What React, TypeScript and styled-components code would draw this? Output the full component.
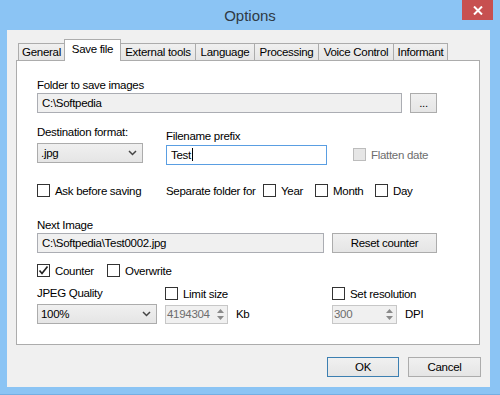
import styled, { createGlobalStyle } from "styled-components";

const GlobalStyle = createGlobalStyle`
  html, body {
    margin: 0;
    padding: 0;
  }
  body {
    width: 500px;
    height: 395px;
    overflow: hidden;
    font-family: "Liberation Sans", Arial, sans-serif;
    font-size: 11.5px;
    letter-spacing: -0.3px;
    color: #000;
  }
`;

const Window = styled.div`
  width: 500px;
  height: 395px;
  box-sizing: border-box;
  background: #8bc4f4;
  border-bottom: 1px solid #74aee2;
  display: flex;
  flex-direction: column;
`;

const TitleBar = styled.div`
  position: relative;
  height: 30px;
  display: flex;
  align-items: center;
  justify-content: center;
  font-size: 15px;
  letter-spacing: 0;
  color: #2f3a44;
  box-sizing: border-box;
`;

const CloseButton = styled.div`
  position: absolute;
  top: 0;
  right: 7px;
  width: 31px;
  height: 20px;
  background: #c75050;
  display: flex;
  align-items: center;
  justify-content: center;
`;

const Client = styled.div`
  flex: 1;
  margin: 0 10px 7px 7px;
  background: #f0f0f0;
  padding: 9px 0 0 9px;
  display: flex;
  flex-direction: column;
`;

const TabStrip = styled.div`
  display: flex;
  align-items: flex-end;
  height: 22px;
  padding-left: 3px;
  margin-bottom: -1px;
  position: relative;
  z-index: 1;
`;

const Tab = styled.div<{ $w: number; $active?: boolean }>`
  width: ${(p) => p.$w}px;
  height: ${(p) => (p.$active ? 22 : 18)}px;
  box-sizing: border-box;
  margin-left: -1px;
  border: 1px solid #acacac;
  border-bottom: ${(p) => (p.$active ? "none" : "1px solid #acacac")};
  background: ${(p) =>
    p.$active ? "#fff" : "linear-gradient(#f0f0f0, #e5e5e5)"};
  display: flex;
  align-items: center;
  justify-content: center;
  padding-bottom: ${(p) => (p.$active ? 3 : 0)}px;
  white-space: nowrap;
`;

const Panel = styled.div`
  width: 464px;
  height: 285px;
  box-sizing: border-box;
  background: #fff;
  border: 1px solid #acacac;
  padding: 0 0 0 20px;
  display: flex;
  flex-direction: column;
`;

const Label = styled.div<{ $top?: number; $disabled?: boolean }>`
  height: 15px;
  line-height: 15px;
  margin-top: ${(p) => p.$top ?? 0}px;
  color: ${(p) => (p.$disabled ? "#6d6d6d" : "#000")};
  white-space: nowrap;
`;

const FieldRow = styled.div<{ $top?: number; $gap?: number }>`
  display: flex;
  align-items: center;
  gap: ${(p) => p.$gap ?? 8}px;
  margin-top: ${(p) => p.$top ?? 0}px;
`;

const TextBox = styled.div<{ $w: number; $focus?: boolean; $readOnly?: boolean }>`
  width: ${(p) => p.$w}px;
  height: 20px;
  box-sizing: border-box;
  border: 1px solid ${(p) => (p.$focus ? "#5a9ee2" : "#abadb3")};
  background: ${(p) => (p.$readOnly ? "#f0f0f0" : "#fff")};
  padding: 0 4px;
  line-height: 18px;
  white-space: nowrap;
  overflow: hidden;
`;

const Caret = styled.span`
  display: inline-block;
  width: 1px;
  height: 13px;
  background: #000;
  vertical-align: -2px;
  margin-left: 1px;
`;

const Button = styled.div<{ $w: number; $default?: boolean }>`
  width: ${(p) => p.$w}px;
  height: 20px;
  box-sizing: border-box;
  border: 1px solid ${(p) => (p.$default ? "#3c7fb1" : "#acacac")};
  background: linear-gradient(#f0f0f0, #e5e5e5);
  display: flex;
  align-items: center;
  justify-content: center;
`;

const Combo = styled.div<{ $w: number }>`
  width: ${(p) => p.$w}px;
  height: 20px;
  box-sizing: border-box;
  border: 1px solid #acacac;
  background: linear-gradient(#f0f0f0, #e5e5e5);
  display: flex;
  align-items: center;
  justify-content: space-between;
  padding: 0 5px 0 3px;
`;

const Columns = styled.div`
  display: flex;
  align-items: flex-start;
`;

const Column = styled.div<{ $w: number }>`
  width: ${(p) => p.$w}px;
  display: flex;
  flex-direction: column;
`;

const CheckRow = styled.div<{ $top?: number }>`
  display: flex;
  align-items: center;
  height: 15px;
  margin-top: ${(p) => p.$top ?? 0}px;
  white-space: nowrap;
`;

const Check = styled.label<{ $w?: number; $disabled?: boolean }>`
  display: flex;
  align-items: center;
  gap: 5px;
  width: ${(p) => (p.$w ? `${p.$w}px` : "auto")};
  color: ${(p) => (p.$disabled ? "#6d6d6d" : "#000")};
`;

const Box = styled.span<{ $disabled?: boolean }>`
  width: 13px;
  height: 13px;
  box-sizing: border-box;
  border: 1px solid ${(p) => (p.$disabled ? "#bcbcbc" : "#333")};
  background: ${(p) => (p.$disabled ? "#e6e6e6" : "#fff")};
  display: flex;
  align-items: center;
  justify-content: center;
  flex: none;
`;

const PlainText = styled.span<{ $w?: number }>`
  width: ${(p) => (p.$w ? `${p.$w}px` : "auto")};
`;

const QualityGrid = styled.div`
  display: grid;
  grid-template-columns: 128px 167px auto;
  row-gap: 3px;
  margin-top: 8px;
  align-items: center;
`;

const Spin = styled.div<{ $w: number }>`
  width: ${(p) => p.$w}px;
  height: 19px;
  box-sizing: border-box;
  border: 1px solid #c7c7c7;
  background: #f0f0f0;
  display: flex;
  align-items: stretch;
  color: #6d6d6d;
`;

const SpinValue = styled.div`
  flex: 1;
  padding-left: 1px;
  line-height: 17px;
`;

const SpinArrows = styled.div`
  width: 13px;
  display: flex;
  flex-direction: column;
  align-items: center;
  justify-content: center;
  gap: 3px;
`;

const SpinGroup = styled.div`
  display: flex;
  align-items: center;
  gap: 8px;
`;

const Footer = styled.div`
  display: flex;
  justify-content: flex-end;
  gap: 9px;
  margin-top: 12px;
  padding-right: 9px;
`;

const Chevron = () => (
  <svg width="9" height="6" viewBox="0 0 9 6">
    <path d="M1 1 L4.5 4.5 L8 1" fill="none" stroke="#444" strokeWidth="1.5" />
  </svg>
);

const CheckBox = ({
  checked,
  disabled,
}: {
  checked?: boolean;
  disabled?: boolean;
}) => (
  <Box $disabled={disabled}>
    {checked && (
      <svg width="11" height="11" viewBox="0 0 11 11">
        <path d="M1.5 5.5 L4 8.5 L9.5 1.5" fill="none" stroke="#222" strokeWidth="1.7" />
      </svg>
    )}
  </Box>
);

const SpinBox = ({ w, value }: { w: number; value: string }) => (
  <Spin $w={w}>
    <SpinValue>{value}</SpinValue>
    <SpinArrows>
      <svg width="7" height="4" viewBox="0 0 7 4">
        <path d="M0 4 L3.5 0 L7 4 Z" fill="#8a8a8a" />
      </svg>
      <svg width="7" height="4" viewBox="0 0 7 4">
        <path d="M0 0 L3.5 4 L7 0 Z" fill="#8a8a8a" />
      </svg>
    </SpinArrows>
  </Spin>
);

const tabs = [
  { name: "General", w: 47 },
  { name: "Save file", w: 57, active: true },
  { name: "External tools", w: 76 },
  { name: "Language", w: 60 },
  { name: "Processing", w: 65 },
  { name: "Voice Control", w: 76 },
  { name: "Informant", w: 55 },
];

function App() {
  return (
    <>
      <GlobalStyle />
      <Window>
        <TitleBar>
          Options
          <CloseButton>
            <svg width="10" height="9" viewBox="0 0 10 9">
              <path d="M1 0.5 L9 8.5 M9 0.5 L1 8.5" stroke="#fff" strokeWidth="2" />
            </svg>
          </CloseButton>
        </TitleBar>
        <Client>
          <TabStrip>
            {tabs.map((t) => (
              <Tab key={t.name} $w={t.w} $active={t.active}>
                {t.name}
              </Tab>
            ))}
          </TabStrip>
          <Panel>
            <Label $top={17}>Folder to save images</Label>
            <FieldRow>
              <TextBox $w={365} $readOnly>
                C:\Softpedia
              </TextBox>
              <Button $w={27}>...</Button>
            </FieldRow>

            <Columns>
              <Column $w={129}>
                <Label $top={12}>Destination format:</Label>
                <FieldRow $top={3}>
                  <Combo $w={106}>
                    .jpg
                    <Chevron />
                  </Combo>
                </FieldRow>
              </Column>
              <Column $w={187}>
                <Label $top={16}>Filename prefix</Label>
                <FieldRow $top={1}>
                  <TextBox $w={161} $focus>
                    Test
                    <Caret />
                  </TextBox>
                </FieldRow>
              </Column>
              <Column $w={120}>
                <CheckRow $top={34}>
                  <Check $disabled>
                    <CheckBox disabled />
                    Flatten date
                  </Check>
                </CheckRow>
              </Column>
            </Columns>

            <CheckRow $top={18}>
              <Check $w={129}>
                <CheckBox />
                Ask before saving
              </Check>
              <PlainText $w={97}>Separate folder for</PlainText>
              <Check $w={52}>
                <CheckBox />
                Year
              </Check>
              <Check $w={60}>
                <CheckBox />
                Month
              </Check>
              <Check>
                <CheckBox />
                Day
              </Check>
            </CheckRow>

            <Label $top={20}>Next Image</Label>
            <FieldRow>
              <TextBox $w={287} $readOnly>
                C:\Softpedia\Test0002.jpg
              </TextBox>
              <Button $w={105}>Reset counter</Button>
            </FieldRow>

            <CheckRow $top={10}>
              <Check $w={70}>
                <CheckBox checked />
                Counter
              </Check>
              <Check>
                <CheckBox />
                Overwrite
              </Check>
            </CheckRow>

            <QualityGrid>
              <Label>JPEG Quality</Label>
              <Check>
                <CheckBox />
                Limit size
              </Check>
              <Check>
                <CheckBox />
                Set resolution
              </Check>
              <Combo $w={120}>
                100%
                <Chevron />
              </Combo>
              <SpinGroup>
                <SpinBox w={63} value="4194304" />
                Kb
              </SpinGroup>
              <SpinGroup>
                <SpinBox w={65} value="300" />
                DPI
              </SpinGroup>
            </QualityGrid>
          </Panel>
          <Footer>
            <Button $w={72} $default>
              OK
            </Button>
            <Button $w={73}>Cancel</Button>
          </Footer>
        </Client>
      </Window>
    </>
  );
}

export default App;
